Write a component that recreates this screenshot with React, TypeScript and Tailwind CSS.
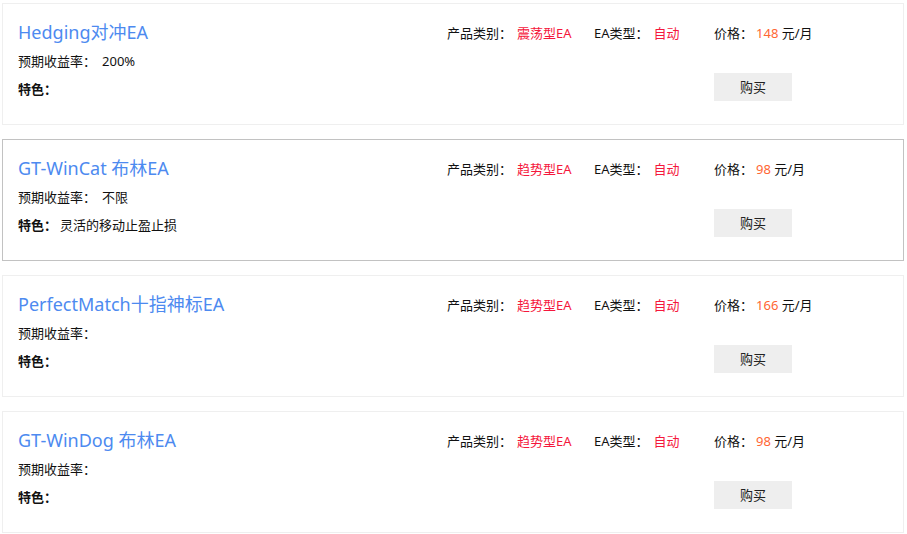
import React from "react";

type Product = {
  name: string;
  yieldRate: string;
  feature: string;
  category: string;
  eaType: string;
  price: number;
  active?: boolean;
};

const products: Product[] = [
  { name: "Hedging对冲EA", yieldRate: "200%", feature: "", category: "震荡型EA", eaType: "自动", price: 148 },
  { name: "GT-WinCat 布林EA", yieldRate: "不限", feature: "灵活的移动止盈止损", category: "趋势型EA", eaType: "自动", price: 98, active: true },
  { name: "PerfectMatch十指神标EA", yieldRate: "", feature: "", category: "趋势型EA", eaType: "自动", price: 166 },
  { name: "GT-WinDog 布林EA", yieldRate: "", feature: "", category: "趋势型EA", eaType: "自动", price: 98 },
];

function ProductCard({ p }: { p: Product }) {
  return (
    <div
      className={
        "mb-[14px] flex border bg-white pt-[15px] pb-[21px] pl-[15px] pr-[15px] " +
        (p.active ? "border-[#c2c2c2]" : "border-[#efefef]")
      }
    >
      <div className="w-[429px] shrink-0">
        <a href="#" className="block text-[18px] leading-[27px] pb-[1px] text-[#4d8af0]">
          {p.name}
        </a>
        <div className="text-[13px] leading-[28px] text-[#111]">
          预期收益率：<span className="ml-[6px]">{p.yieldRate}</span>
        </div>
        <div className="text-[13px] leading-[28px] text-[#111]">
          <span className="font-bold">特色：</span>
          <span className="ml-[3px]">{p.feature}</span>
        </div>
      </div>

      <div className="flex w-[267px] shrink-0 text-[13px] leading-[28px] text-[#111]">
        <div className="w-[147px]">
          产品类别：<span className="ml-[5px] text-[#f5173c]">{p.category}</span>
        </div>
        <div>
          EA类型：<span className="ml-[5px] text-[#f5173c]">{p.eaType}</span>
        </div>
      </div>

      <div className="flex-1 text-[13px] leading-[28px] text-[#111]">
        <div>
          价格：<span className="ml-[3px] text-[#ff6633]">{p.price}</span> 元/月
        </div>
        <button className="mt-[26px] h-[28px] w-[78px] bg-[#eeeeee] text-[13px] text-[#222]">购买</button>
      </div>
    </div>
  );
}

export default function App() {
  return (
    <div
      className="min-h-screen bg-white pt-[3px] pl-[2px] pr-[3px]"
      style={{ fontFamily: '"Noto Sans", "Noto Sans CJK SC", sans-serif' }}
    >
      {products.map((p) => (
        <ProductCard key={p.name} p={p} />
      ))}
    </div>
  );
}
